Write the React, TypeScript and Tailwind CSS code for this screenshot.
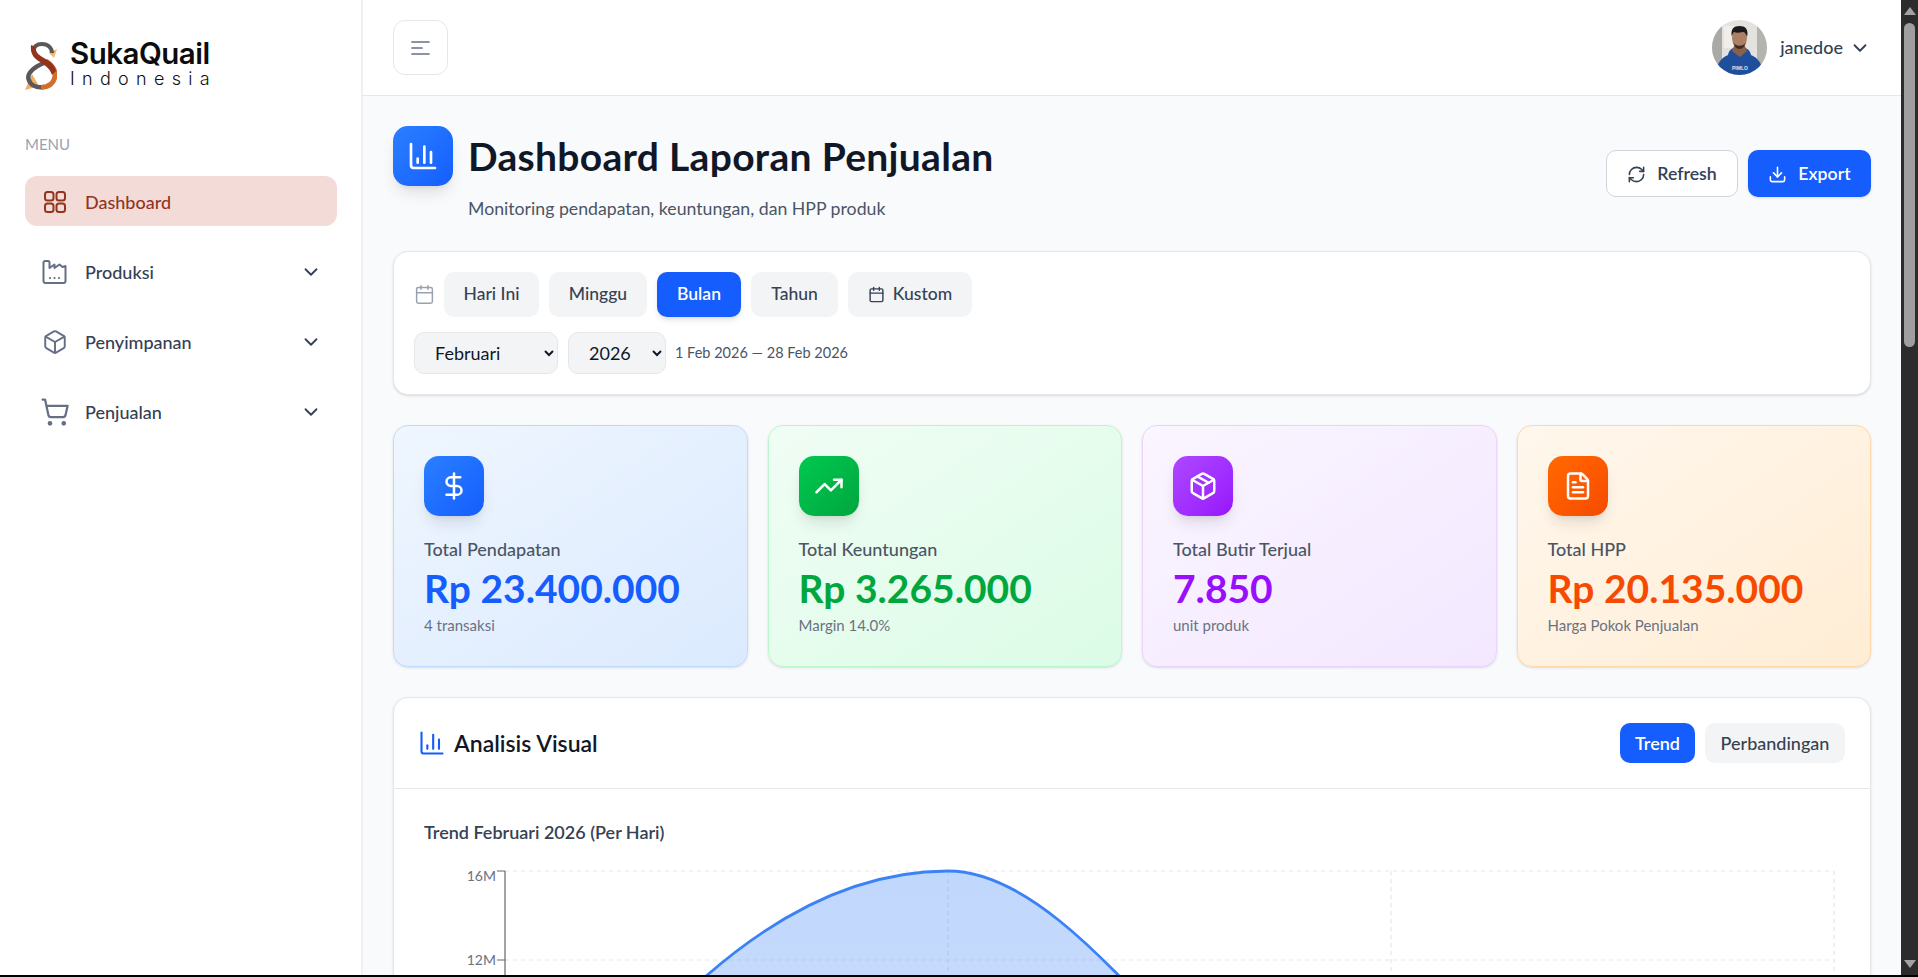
import { ChartColumn, Box, Calendar, ChevronDown, DollarSign, Download, FileText, Package, RefreshCw, ShoppingCart, TrendingUp } from 'lucide-react'
import type { ReactNode } from 'react'

const FONT = 'font-["Lato","Liberation_Sans",sans-serif]'

function Logo() {
  return (
    <svg width="32" height="48" viewBox="0 0 32 48" className="shrink-0">
      {/* wing tips */}
      <path d="M24 11l8-4-3 9z" fill="#f7b566" />
      <path d="M0 48l7-16 7 12z" fill="#f2ad62" />
      {/* lower loops */}
      <path d="M19 21C9 25 2 31 3.500 37C5 43 11 46 18 45" fill="none" stroke="#5b5859" strokeWidth="4.500" />
      <path d="M21 19C27 23 31 29 30 34C29 41 24 45 16 45.500" fill="none" stroke="#d0702b" strokeWidth="5" />
      {/* top loop */}
      <path d="M8 9C9 4 13 2 17 2C23 2 27 6 27 11" fill="none" stroke="#5b5859" strokeWidth="4" />
      {/* red stroke */}
      <path d="M6 3C5 11 8 16 15 20C21 24 25 27 27 33L31 29C30 23 25 19 19 16C13 13 10 9 11 5z" fill="#93341f" />
    </svg>
  )
}

function Avatar() {
  return (
    <svg width="55" height="55" viewBox="0 0 55 55" className="rounded-full shrink-0">
      <rect width="55" height="55" fill="#e4e2df" />
      <rect x="0" y="0" width="10" height="55" fill="#a9a9a7" />
      <rect x="45" y="0" width="10" height="55" fill="#b5b3b0" />
      <rect x="12" y="6" width="10" height="22" fill="#f1ede8" />
      <path d="M4 55C4 44 9 38 16 35C17 30 20 27 27 27C35 27 38 30 39 35C46 38 51 44 51 55z" fill="#1f4f9c" />
      <path d="M20 31l8 6 7-6-2-5H22z" fill="#8b6149" />
      <ellipse cx="27.500" cy="18" rx="7.500" ry="10" fill="#ad7f63" />
      <path d="M20 17C18 9 22 6 27.500 6C33 6 37 9 35 17C34 14 33 12 31 12C27 13 24 13 22 12C21 13 20 15 20 17z" fill="#1c1a1c" />
      <path d="M21 22C23 27 32 27 34 22C33 26 31 29 27.500 29S22 26 21 22z" fill="#3b2d28" />
      <text x="20" y="50" fontSize="5" fill="#dbe7f7" fontFamily="Liberation Sans, sans-serif" fontWeight="700">PIMLO</text>
    </svg>
  )
}

function FactoryIcon() {
  return (
    <svg width="26" height="26" viewBox="0 0 26 26" fill="none" stroke="#667085" strokeWidth="2" strokeLinecap="round" strokeLinejoin="round">
      <path d="M1.500 3.500c0-.8.7-1.500 1.500-1.500h3c.8 0 1.500.7 1.500 1.500V9l5-3.500V9l5-3.500 3 2.500 3-1v15c0 1.100-.9 2-2 2H3.500c-1.100 0-2-.9-2-2z" />
      <path d="M8 19h.01M12.500 19h.01M17 19h.01" strokeWidth="2.200" />
    </svg>
  )
}

function GridIcon() {
  return (
    <svg width="22" height="22" viewBox="0 0 22 22" fill="none" stroke="#93341f" strokeWidth="2">
      <rect x="1" y="1" width="8.500" height="8.500" rx="2.500" />
      <rect x="12.500" y="1" width="8.500" height="8.500" rx="2.500" />
      <rect x="1" y="12.500" width="8.500" height="8.500" rx="2.500" />
      <rect x="12.500" y="12.500" width="8.500" height="8.500" rx="2.500" />
    </svg>
  )
}

function NavItem({ icon, label }: { icon: ReactNode; label: string }) {
  return (
    <div className="flex h-[50px] items-center pt-[2px] pr-[15px] pl-[17px]">
      <span className="flex w-[26px] justify-center">{icon}</span>
      <span className="ml-[17px] flex-1 text-[18px] font-medium text-[#344054]">{label}</span>
      <ChevronDown size={22} strokeWidth={2} className="text-[#344054]" />
    </div>
  )
}

function Sidebar() {
  return (
    <aside className="w-[363px] shrink-0 border-r-2 border-[#eef0f3] bg-white pr-[24px] pl-[25px]">
      <div className="flex h-[90px] items-end">
        <Logo />
        <div className="ml-[13px] flex w-[145px] flex-col pb-[1px]">
          <span className='font-["Inter",sans-serif] text-[29.500px] leading-[30px] font-semibold tracking-[-0.5px] text-[#0c0c0c]'>SukaQuail</span>
          <span className='font-["Inter",sans-serif] text-[18px] leading-[21px] font-light tracking-[7.300px] text-[#111]'>Indonesia</span>
        </div>
      </div>
      <div className="mt-[42px] text-[15px] leading-[24px] text-[#98a2b3]">MENU</div>
      <nav className="mt-[20px] flex flex-col gap-[20px]">
        <div className="flex h-[50px] items-center rounded-[12px] bg-[#f3dcd7] pt-[2px] pl-[19px]">
          <GridIcon />
          <span className="ml-[19px] text-[18px] font-medium text-[#93341f]">Dashboard</span>
        </div>
        <NavItem icon={<FactoryIcon />} label="Produksi" />
        <NavItem icon={<Box size={28} strokeWidth={1.8} className="text-[#667085]" />} label="Penyimpanan" />
        <NavItem icon={<ShoppingCart size={30} strokeWidth={1.8} className="shrink-0 text-[#667085]" />} label="Penjualan" />
      </nav>
    </aside>
  )
}

function TopBar() {
  return (
    <header className="flex h-[96px] shrink-0 items-center justify-between border-b border-gray-200 bg-white px-[30px]">
      <button className="flex h-[55px] w-[55px] items-center justify-center rounded-[12px] border border-gray-200 bg-white">
        <svg width="19" height="14" viewBox="0 0 19 14" stroke="#667085" strokeWidth="1.700" strokeLinecap="round">
          <path d="M1 1h17M1 7h10M1 13h17" />
        </svg>
      </button>
      <div className="flex items-center">
        <Avatar />
        <span className="ml-[13px] text-[18px] font-medium text-[#344054]">janedoe</span>
        <ChevronDown size={22} strokeWidth={2} className="ml-[6px] text-[#344054]" />
      </div>
    </header>
  )
}

function RangeButton({ label, width, active, icon }: { label: string; width: string; active?: boolean; icon?: ReactNode }) {
  return (
    <button className={active
      ? `flex h-[45px] items-center justify-center gap-[8px] rounded-[10px] bg-[#155dfc] text-[17.500px] font-semibold text-white shadow-md ${width}`
      : `flex h-[45px] items-center justify-center gap-[8px] rounded-[10px] bg-gray-100 text-[17.500px] font-medium text-[#364153] ${width}`}>
      {icon}
      {label}
    </button>
  )
}

function FilterCard() {
  return (
    <section className="mt-[30px] h-[144px] rounded-[15px] border border-gray-200 bg-white pt-[20px] pl-[20px] shadow-sm">
      <div className="flex items-center gap-[9px]">
        <Calendar size={21} strokeWidth={1.7} className="text-[#99a1af]" />
        <div className="flex gap-[10px]">
          <RangeButton label="Hari Ini" width="w-[95px]" />
          <RangeButton label="Minggu" width="w-[98px]" />
          <RangeButton label="Bulan" width="w-[84px]" active />
          <RangeButton label="Tahun" width="w-[87px]" />
          <RangeButton label="Kustom" width="w-[124px]" icon={<Calendar size={17} strokeWidth={2} />} />
        </div>
      </div>
      <div className="mt-[15px] flex items-center gap-[10px]">
        <select defaultValue="Februari" className="h-[42px] w-[144px] rounded-[10px] border border-gray-200 bg-gray-100 pr-[8px] pl-[16px] text-[18px] text-[#101828]">
          <option>Januari</option>
          <option>Februari</option>
          <option>Maret</option>
        </select>
        <select defaultValue="2026" className="h-[42px] w-[98px] rounded-[10px] border border-gray-200 bg-gray-100 pr-[8px] pl-[16px] text-[18px] text-[#101828]">
          <option>2025</option>
          <option>2026</option>
        </select>
        <span className="-ml-[1px] text-[14.500px] text-[#4a5565]">1 Feb 2026 — 28 Feb 2026</span>
      </div>
    </section>
  )
}

const STATS = [
  { label: 'Total Pendapatan', value: 'Rp 23.400.000', sub: '4 transaksi', card: 'border-blue-200 from-blue-50 to-blue-100', icon: 'from-blue-500 to-blue-600', text: 'text-blue-600', glyph: <DollarSign size={30} strokeWidth={2} /> },
  { label: 'Total Keuntungan', value: 'Rp 3.265.000', sub: 'Margin 14.0%', card: 'border-green-200 from-green-50 to-green-100', icon: 'from-green-500 to-green-600', text: 'text-green-600', glyph: <TrendingUp size={30} strokeWidth={2} /> },
  { label: 'Total Butir Terjual', value: '7.850', sub: 'unit produk', card: 'border-purple-200 from-purple-50 to-purple-100', icon: 'from-purple-500 to-purple-600', text: 'text-purple-600', glyph: <Package size={30} strokeWidth={2} /> },
  { label: 'Total HPP', value: 'Rp 20.135.000', sub: 'Harga Pokok Penjualan', card: 'border-orange-200 from-orange-50 to-orange-100', icon: 'from-orange-500 to-orange-600', text: 'text-orange-600', glyph: <FileText size={30} strokeWidth={2} /> },
]

function StatCards() {
  return (
    <section className="mt-[30px] grid h-[242px] grid-cols-4 gap-[20px]">
      {STATS.map(s => (
        <div key={s.label} className={`rounded-[15px] border bg-linear-to-br px-[30px] pt-[30px] shadow-sm ${s.card}`}>
          <div className={`flex h-[60px] w-[60px] items-center justify-center rounded-[15px] bg-linear-to-br text-white shadow-lg ${s.icon}`}>
            {s.glyph}
          </div>
          <div className="mt-[22px] text-[18px] leading-[22px] font-medium text-[#4a5565]">{s.label}</div>
          <div className={`mt-[6px] text-[39px] leading-[44px] font-bold ${s.text}`}>{s.value}</div>
          <div className="mt-[6px] text-[15px] leading-[18px] text-[#6a7282]">{s.sub}</div>
        </div>
      ))}
    </section>
  )
}

function TrendChart() {
  const gridX = [524, 967, 1410]
  const line = 'M81 367C229 125 376 10 524 10C672 10 819 325 967 330'
  return (
    <svg width="1417" height="340" viewBox="0 0 1417 340" className="mt-[17px] block">
      <defs>
        <linearGradient id="trendFill" x1="0" y1="0" x2="0" y2="1">
          <stop offset="0%" stopColor="#3b82f6" stopOpacity="0.32" />
          <stop offset="100%" stopColor="#3b82f6" stopOpacity="0.24" />
        </linearGradient>
      </defs>
      <g stroke="#e5e7eb" strokeWidth="1.200" strokeDasharray="4 4" fill="none">
        <path d="M81 10H1410M81 99H1410" />
        {gridX.map(x => <path key={x} d={`M${x} 10V340`} />)}
      </g>
      <path d={`${line}V367H81Z`} fill="url(#trendFill)" />
      <path d={line} fill="none" stroke="#3b82f6" strokeWidth="2.800" />
      <path d="M81 10V340" stroke="#666" strokeWidth="1.200" />
      <path d="M73 10H81M73 99H81" stroke="#666" strokeWidth="1.200" />
      <g fill="#6a7282" fontSize="14" textAnchor="end" fontFamily="Lato, sans-serif">
        <text x="72" y="20">16M</text>
        <text x="72" y="104">12M</text>
      </g>
    </svg>
  )
}

function ChartCard() {
  return (
    <section className="mt-[30px] h-[400px] rounded-[15px] border border-gray-200 bg-white shadow-sm">
      <div className="flex h-[91px] items-center justify-between border-b border-gray-200 pr-[25px] pl-[24px]">
        <div className="flex items-center gap-[8px]">
          <ChartColumn size={28} strokeWidth={1.8} className="text-[#155dfc]" />
          <h2 className="text-[23px] font-semibold text-[#101828]">Analisis Visual</h2>
        </div>
        <div className="flex gap-[10px]">
          <button className="h-[40px] w-[75px] rounded-[10px] bg-[#155dfc] text-[18px] font-semibold text-white">Trend</button>
          <button className="h-[40px] w-[140px] rounded-[10px] bg-gray-100 text-[18px] font-medium text-[#364153]">Perbandingan</button>
        </div>
      </div>
      <div className="px-[30px] pt-[31px]">
        <h3 className="text-[18px] leading-[24px] font-semibold text-[#364153]">Trend Februari 2026 (Per Hari)</h3>
        <TrendChart />
      </div>
    </section>
  )
}

function Scrollbar() {
  return (
    <div className="flex w-[17px] shrink-0 flex-col items-center justify-between bg-[#2c2c2c] py-[7px]">
      <div className="flex w-full flex-col items-center">
        <div className="h-0 w-0 border-x-[6px] border-b-[8px] border-x-transparent border-b-[#a3a3a3]" />
        <div className="mt-[8px] h-[324px] w-[11px] rounded-full bg-[#9f9f9f]" />
      </div>
      <div className="h-0 w-0 border-x-[6px] border-t-[8px] border-x-transparent border-t-[#a3a3a3]" />
    </div>
  )
}

export default function App() {
  return (
    <div className={`flex h-[977px] w-[1918px] flex-col overflow-hidden bg-black ${FONT}`}>
      <div className="flex h-[975px]">
        <Sidebar />
        <main className="flex min-w-0 flex-1 flex-col overflow-hidden bg-gray-50">
          <TopBar />
          <div className="px-[30px] pt-[30px]">
            <div className="flex h-[95px] items-center justify-between">
              <div>
                <div className="flex items-center gap-[15px]">
                  <div className="flex h-[60px] w-[60px] items-center justify-center rounded-[15px] bg-linear-to-br from-blue-500 to-blue-600 text-white shadow-lg">
                    <ChartColumn size={32} strokeWidth={2} />
                  </div>
                  <h1 className="text-[39px] leading-[46px] font-bold tracking-[0.3px] text-[#101828]">Dashboard Laporan Penjualan</h1>
                </div>
                <p className="mt-[11px] ml-[75px] text-[17.700px] leading-[24px] text-[#4a5565]">Monitoring pendapatan, keuntungan, dan HPP produk</p>
              </div>
              <div className="flex gap-[10px]">
                <button className="flex h-[47px] w-[132px] items-center justify-center gap-[11px] rounded-[10px] border border-gray-300 bg-white pt-[1px] text-[17.700px] font-semibold text-[#344054]">
                  <RefreshCw size={19} strokeWidth={2} />
                  Refresh
                </button>
                <button className="flex h-[47px] w-[123px] items-center justify-center gap-[11px] rounded-[10px] bg-[#155dfc] pt-[1px] text-[17.700px] font-semibold text-white shadow-sm">
                  <Download size={19} strokeWidth={2} />
                  Export
                </button>
              </div>
            </div>
            <FilterCard />
            <StatCards />
            <ChartCard />
          </div>
        </main>
        <Scrollbar />
      </div>
    </div>
  )
}
